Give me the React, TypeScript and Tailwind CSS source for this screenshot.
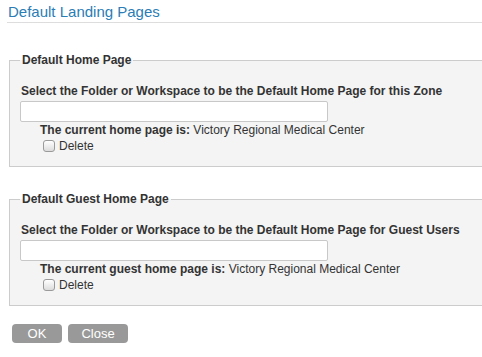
import React from "react";

const font = { fontFamily: '"Liberation Sans", Arial, sans-serif' };

const Checkbox = () => (
  <span className="inline-block w-[12px] h-[12px] rounded-[3px] border border-[#9a9a9a] bg-gradient-to-b from-white to-[#dcdcdc]" />
);

const HomePageFieldset = ({
  legend,
  label,
  current,
  className,
}: {
  legend: string;
  label: string;
  current: string;
  className?: string;
}) => (
  <fieldset
    className={`w-[540px] ml-[9px] border border-[#cccccc] bg-[#f4f4f4] pl-[10px] pb-[12px] ${className ?? ""}`}
  >
    <legend className="px-[2px] text-[12px] leading-[14px] font-bold text-[#333]">{legend}</legend>
    <div className="mt-[17px] pl-[1px] text-[12px] leading-[14px] font-bold text-[#333]">{label}</div>
    <input
      type="text"
      className="mt-[3px] block w-[308px] h-[21px] bg-white border border-[#c8c8c8] rounded-[2px] outline-none"
    />
    <div className="pl-[20px] text-[12px] leading-[14px] text-[#333]">
      <div className="mt-[1px]">
        <span className="font-bold">{current}</span> Victory Regional Medical Center
      </div>
      <label className="mt-[1px] flex items-center h-[16px] pl-[3px] gap-[4px]">
        <Checkbox />
        <span>Delete</span>
      </label>
    </div>
  </fieldset>
);

export default function App() {
  return (
    <div className="w-[482px] h-[357px] overflow-hidden bg-white" style={font}>
      <div className="ml-[7px] pt-[2px] border-b border-[#dddddd]">
        <h1 className="pl-[1px] text-[15px] leading-[20px] font-normal text-[#2a7db5]">Default Landing Pages</h1>
      </div>

      <HomePageFieldset
        className="mt-[30px]"
        legend="Default Home Page"
        label="Select the Folder or Workspace to be the Default Home Page for this Zone"
        current="The current home page is:"
      />

      <HomePageFieldset
        className="mt-[25px]"
        legend="Default Guest Home Page"
        label="Select the Folder or Workspace to be the Default Home Page for Guest Users"
        current="The current guest home page is:"
      />

      <div className="mt-[18px] ml-[12px] flex gap-[6px]">
        <button className="w-[50px] h-[19px] rounded-[4px] bg-[#999999] text-white text-[13px] leading-[19px]">OK</button>
        <button className="w-[60px] h-[19px] rounded-[4px] bg-[#999999] text-white text-[13px] leading-[19px]">Close</button>
      </div>
    </div>
  );
}
